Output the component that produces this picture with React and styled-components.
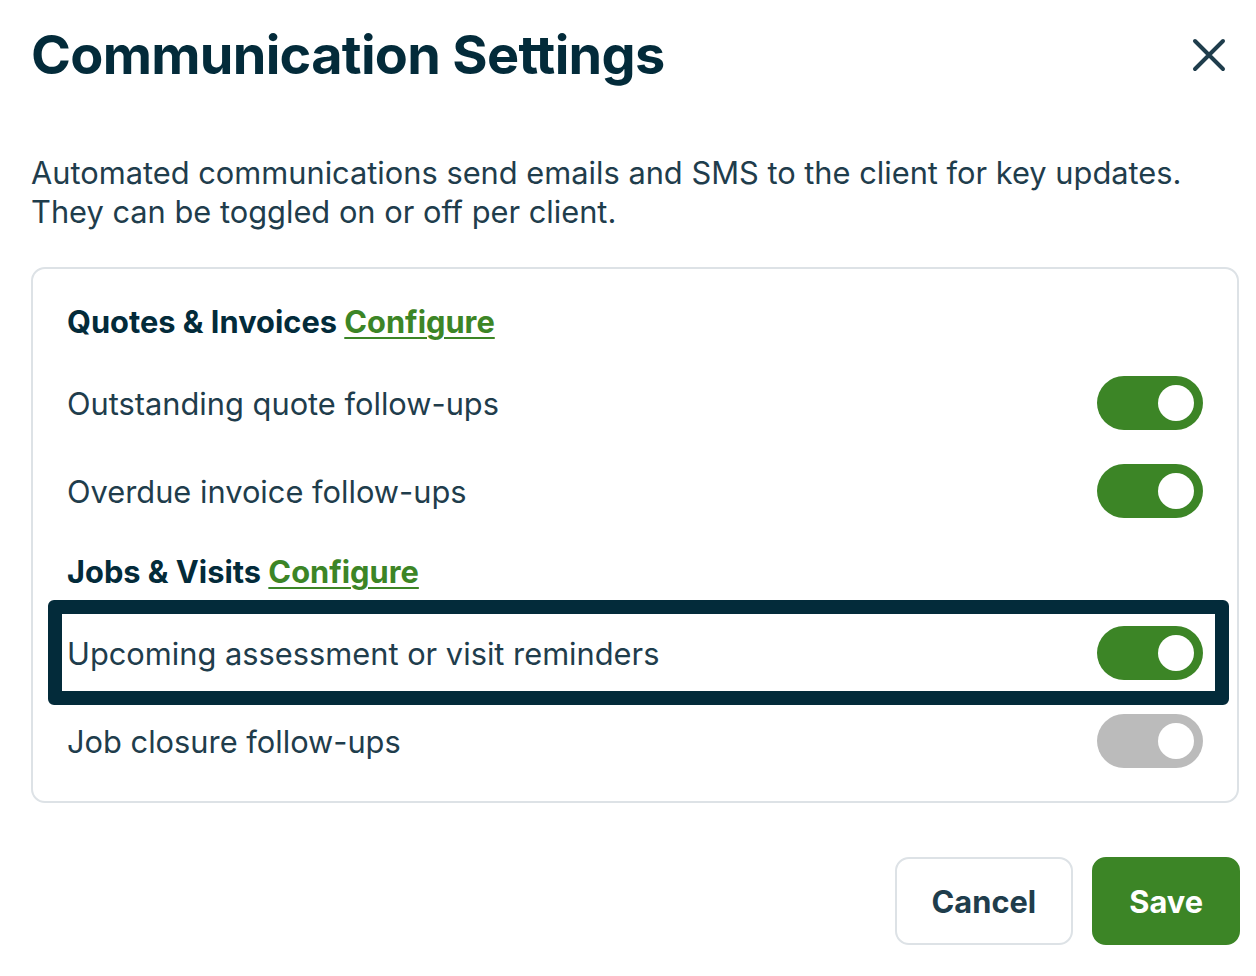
import React from "react";
import styled, { createGlobalStyle } from "styled-components";

const Global = createGlobalStyle`
  html, body { margin: 0; padding: 0; background: #fff; }
  body { font-family: Inter, "Noto Sans", sans-serif; color: #1f3d4c; }
  * { box-sizing: border-box; }
`;

const Dialog = styled.div`
  width: 1256px;
  padding: 22px 16px 30px 31px;
  display: flex;
  flex-direction: column;
`;

const Header = styled.div`
  display: flex;
  align-items: center;
  justify-content: space-between;
  height: 66px;
`;

const Title = styled.h1`
  margin: 0;
  font-size: 54px;
  font-weight: 700;
  color: #032b3a;
  letter-spacing: -0.7px;
  line-height: 66px;
`;

const CloseButton = styled.button`
  border: 0;
  background: none;
  padding: 0;
  width: 40px;
  height: 40px;
  display: flex;
  align-items: center;
  justify-content: center;
  margin-right: 11px;
  color: #1f3d4c;
  cursor: pointer;
`;

const Intro = styled.p`
  margin: 65px 0 36px;
  font-size: 30.8px;
  line-height: 39px;
  color: #1f3d4c;
`;

const Card = styled.div`
  border: 2px solid #dde2e6;
  border-radius: 14px;
  padding: 33px 34px;
  display: flex;
  flex-direction: column;
  gap: 34px;
  margin-right: 1px;
`;

const SectionTitle = styled.div`
  height: 40px;
  line-height: 40px;
  font-size: 30.8px;
  font-weight: 700;
  color: #032b3a;
`;

const Link = styled.a`
  color: #3c8526;
  text-decoration: underline;
  text-underline-offset: 4px;
  text-decoration-thickness: 2px;
`;

const Row = styled.div`
  position: relative;
  height: 54px;
  display: flex;
  align-items: center;
  justify-content: space-between;
  font-size: 30.8px;
  color: #1f3d4c;

  ${(p) =>
    p.$focused &&
    `
    &::after {
      content: "";
      position: absolute;
      top: -26px;
      left: -19px;
      right: -26px;
      bottom: -25px;
      border: 14px solid #032b3a;
      border-radius: 6px;
      pointer-events: none;
    }
  `}
`;

const Toggle = styled.span`
  width: 106px;
  height: 54px;
  border-radius: 27px;
  background: ${(p) => (p.$on ? "#3c8526" : "#bbbbbb")};
  position: relative;
  flex: none;

  &::after {
    content: "";
    position: absolute;
    top: 9px;
    right: 9px;
    width: 36px;
    height: 36px;
    border-radius: 50%;
    background: #fff;
  }
`;

const Footer = styled.div`
  display: flex;
  justify-content: flex-end;
  gap: 19px;
  margin-top: 54px;
`;

const Button = styled.button`
  height: 88px;
  padding: 0 35px;
  border-radius: 14px;
  font-family: inherit;
  font-size: 30.8px;
  font-weight: 700;
  border: 2px solid ${(p) => (p.$primary ? "#3c8526" : "#dde2e6")};
  background: ${(p) => (p.$primary ? "#3c8526" : "#fff")};
  color: ${(p) => (p.$primary ? "#fff" : "#1f3d4c")};
  cursor: pointer;
`;

const rows = [
  { type: "section", title: "Quotes & Invoices" },
  { type: "row", label: "Outstanding quote follow-ups", on: true },
  { type: "row", label: "Overdue invoice follow-ups", on: true },
  { type: "section", title: "Jobs & Visits" },
  { type: "row", label: "Upcoming assessment or visit reminders", on: true, focused: true },
  { type: "row", label: "Job closure follow-ups", on: false },
];

export default function App() {
  return (
    <>
      <Global />
      <Dialog>
        <Header>
          <Title>Communication Settings</Title>
          <CloseButton aria-label="Close">
            <svg width="34" height="34" viewBox="0 0 34 34" fill="none" stroke="currentColor" strokeWidth="4" strokeLinecap="round">
              <path d="M3 3L31 31M31 3L3 31" />
            </svg>
          </CloseButton>
        </Header>
        <Intro>
          Automated communications send emails and SMS to the client for key updates.
          <br />
          They can be toggled on or off per client.
        </Intro>
        <Card>
          {rows.map((r, i) =>
            r.type === "section" ? (
              <SectionTitle key={i}>
                {r.title} <Link href="#">Configure</Link>
              </SectionTitle>
            ) : (
              <Row key={i} $focused={r.focused}>
                <span>{r.label}</span>
                <Toggle $on={r.on} role="switch" aria-checked={r.on} />
              </Row>
            )
          )}
        </Card>
        <Footer>
          <Button>Cancel</Button>
          <Button $primary>Save</Button>
        </Footer>
      </Dialog>
    </>
  );
}
